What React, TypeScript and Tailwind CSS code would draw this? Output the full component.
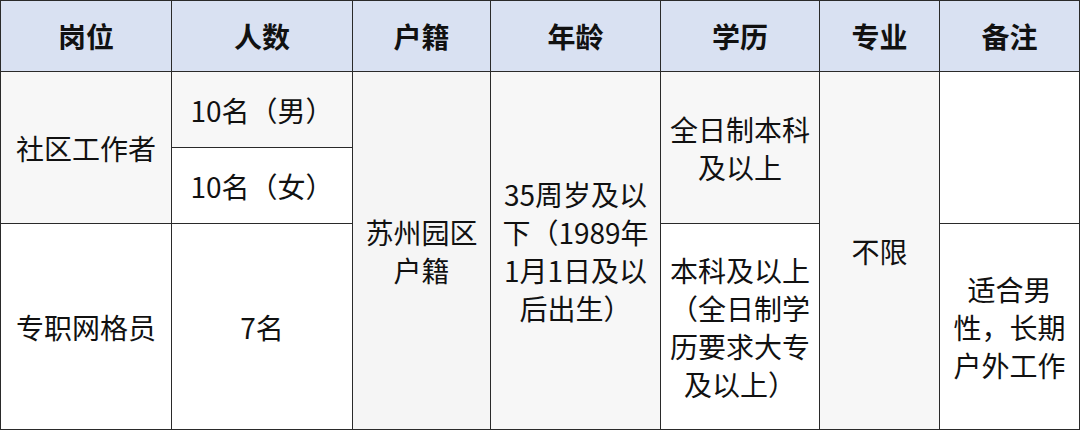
import React from "react";

const font = { fontFamily: '"Noto Sans CJK SC", "Noto Sans", sans-serif' };

function Cell({
  className = "",
  lines,
}: {
  className?: string;
  lines?: string[];
}) {
  return (
    <div
      className={`flex items-center justify-center text-center text-[28px] leading-[38px] text-[#111] ${className}`}
    >
      {lines && (
        <div>
          {lines.map((l, i) => (
            <div key={i} className="whitespace-nowrap">
              {l}
            </div>
          ))}
        </div>
      )}
    </div>
  );
}

export default function App() {
  const headers = ["岗位", "人数", "户籍", "年龄", "学历", "专业", "备注"];
  return (
    <div className="w-[1080px] h-[430px] bg-white" style={font}>
      <div className="grid h-[430px] w-[1080px] grid-cols-[170px_180px_137px_169px_158px_119px_139px] grid-rows-[70px_75px_75px_205px] gap-px bg-[#2a2a2a] p-px">
        {headers.map((h) => (
          <div
            key={h}
            className="flex items-center justify-center bg-[#d9e1f2] text-[28px] font-bold text-[#111]"
          >
            {h}
          </div>
        ))}
        <Cell className="row-span-2 bg-[#f7f7f7]" lines={["社区工作者"]} />
        <Cell className="bg-[#f7f7f7]" lines={["10名（男）"]} />
        <Cell className="row-span-3 bg-[#f5f5f5]" lines={["苏州园区", "户籍"]} />
        <Cell
          className="row-span-3 bg-[#f7f7f7]"
          lines={["35周岁及以", "下（1989年", "1月1日及以", "后出生）"]}
        />
        <Cell className="row-span-2 bg-[#f7f7f7]" lines={["全日制本科", "及以上"]} />
        <Cell className="row-span-3 bg-[#f7f7f7]" lines={["不限"]} />
        <Cell className="row-span-2 bg-white" />
        <Cell className="bg-white" lines={["10名（女）"]} />
        <Cell className="bg-white" lines={["专职网格员"]} />
        <Cell className="bg-white" lines={["7名"]} />
        <Cell
          className="bg-white"
          lines={["本科及以上", "（全日制学", "历要求大专", "及以上）"]}
        />
        <Cell className="bg-white" lines={["适合男", "性，长期", "户外工作"]} />
      </div>
    </div>
  );
}
